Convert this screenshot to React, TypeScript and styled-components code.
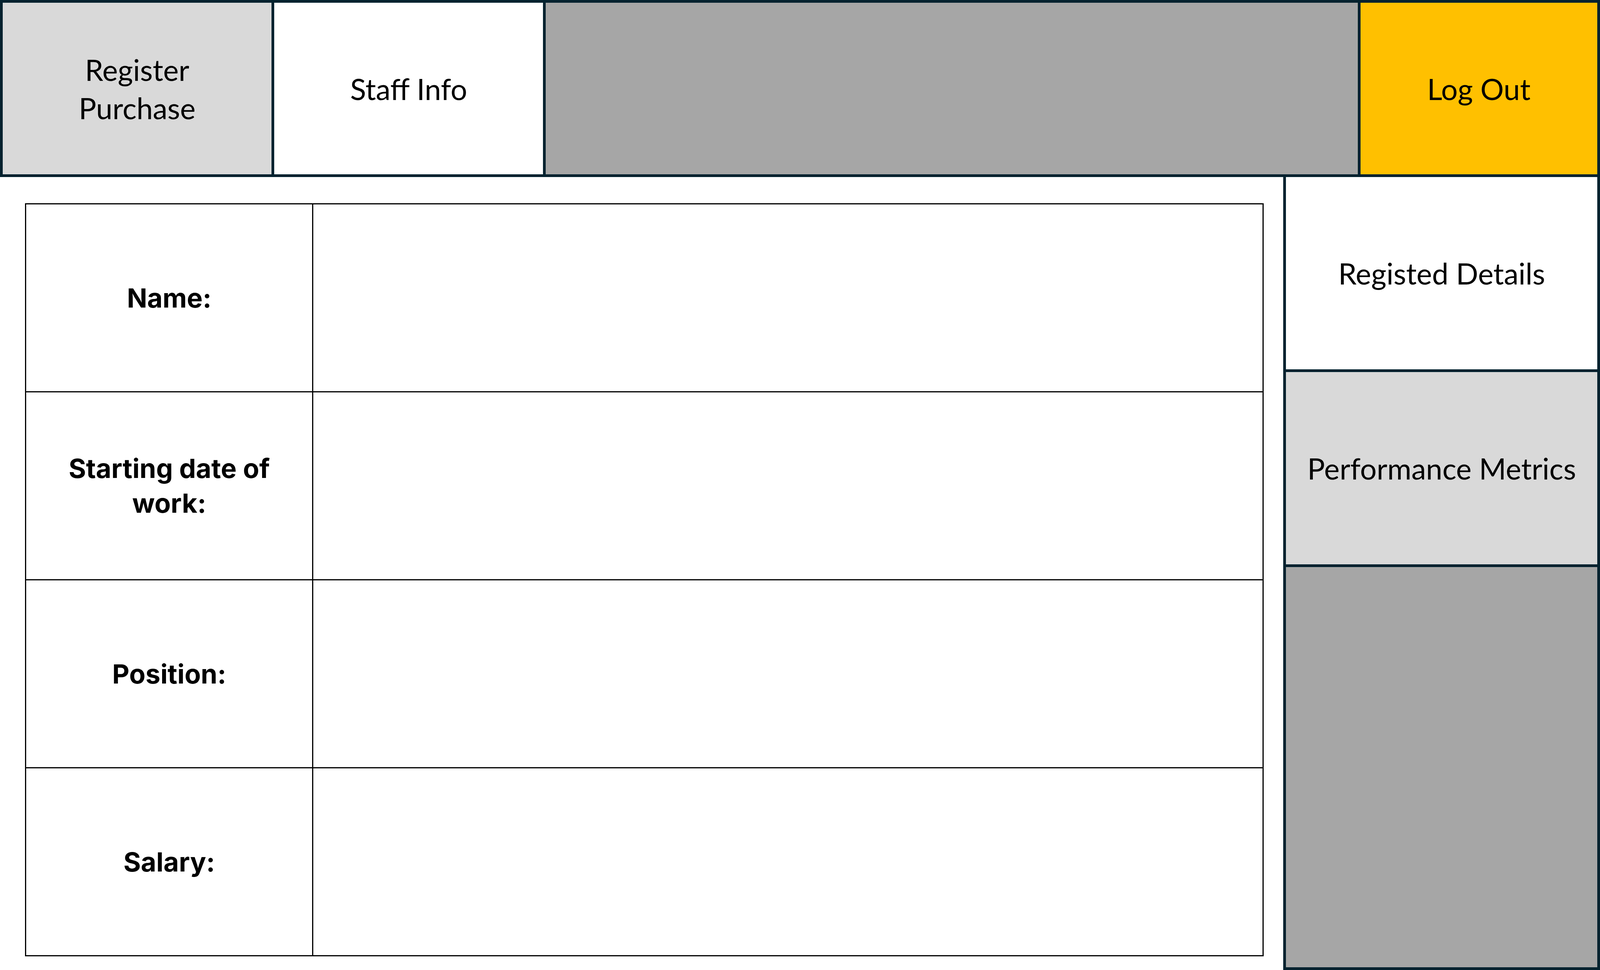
import React from 'react';
import styled, { createGlobalStyle } from 'styled-components';

const NAVY = '#04222f';

const GlobalStyle = createGlobalStyle`
    html, body {
        margin: 0;
        padding: 0;
        background: #ffffff;
        overflow: hidden;
    }
    body {
        font-family: Lato, Inter, "Noto Sans", sans-serif;
        color: #000000;
    }
`;

const Page = styled.div`
    display: flex;
    flex-direction: column;
    width: 100vw;
    height: 100vh;
    overflow: hidden;
`;

const TopBar = styled.nav`
    display: grid;
    grid-template-columns: 741fr 741fr 2238fr 653fr;
    gap: 7px;
    height: 439px;
    border: 7px solid ${NAVY};
    background: ${NAVY};
`;

const NavCell = styled.div<{ $bg: string }>`
    display: flex;
    align-items: center;
    justify-content: center;
    min-width: 0;
    padding: 0 80px;
    background: ${props => props.$bg};
    font-size: 75px;
    line-height: 98px;
    text-align: center;
`;

const Body = styled.div`
    display: flex;
    flex: 1;
    min-height: 0;
`;

const Content = styled.main`
    flex: 1;
    min-width: 0;
    padding: 67px 1.23% 0 1.57%;
`;

const InfoTable = styled.table`
    width: 100%;
    border-collapse: collapse;
    table-layout: fixed;
`;

const LabelCol = styled.col`
    width: 23.2%;
`;

const LabelCell = styled.th`
    height: 476px;
    padding: 0 76px;
    border: 3px solid #000000;
    font-family: Inter, "Noto Sans", sans-serif;
    font-size: 68px;
    line-height: 89px;
    font-weight: 700;
    text-align: center;
    vertical-align: middle;
`;

const ValueCell = styled.td`
    height: 476px;
    border: 3px solid #000000;
`;

const SideBar = styled.aside`
    display: flex;
    flex-direction: column;
    gap: 7px;
    width: 19.79%;
    box-sizing: border-box;
    border: 7px solid ${NAVY};
    border-top: none;
    background: ${NAVY};
`;

const SideItem = styled.div<{ $bg: string; $grow?: boolean }>`
    display: flex;
    align-items: center;
    justify-content: center;
    height: ${props => (props.$grow ? 'auto' : '492px')};
    flex: ${props => (props.$grow ? 1 : 'none')};
    background: ${props => props.$bg};
    font-size: 75px;
    text-align: center;
    white-space: nowrap;
`;

const rows = ['Name:', 'Starting date of work:', 'Position:', 'Salary:'];

const App = () => {
    return (
        <>
            <GlobalStyle />
            <Page>
                <TopBar>
                    <NavCell $bg="#d9d9d9">Register Purchase</NavCell>
                    <NavCell $bg="#ffffff">Staff Info</NavCell>
                    <NavCell $bg="#a6a6a6" />
                    <NavCell $bg="#ffc000">Log Out</NavCell>
                </TopBar>

                <Body>
                    <Content>
                        <InfoTable>
                            <colgroup>
                                <LabelCol />
                                <col />
                            </colgroup>
                            <tbody>
                                {rows.map(label => (
                                    <tr key={label}>
                                        <LabelCell>{label}</LabelCell>
                                        <ValueCell />
                                    </tr>
                                ))}
                            </tbody>
                        </InfoTable>
                    </Content>

                    <SideBar>
                        <SideItem $bg="#ffffff">Registed Details</SideItem>
                        <SideItem $bg="#d9d9d9">Performance Metrics</SideItem>
                        <SideItem $bg="#a6a6a6" $grow />
                    </SideBar>
                </Body>
            </Page>
        </>
    );
};

export default App;
